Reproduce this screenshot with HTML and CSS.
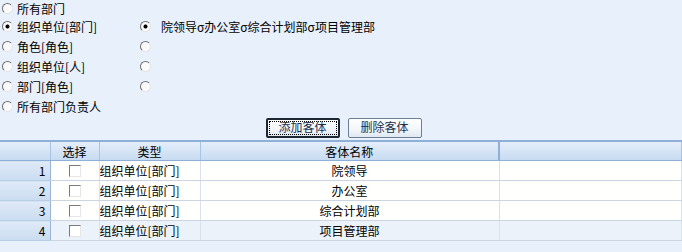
FILE: index.html
```html
<!DOCTYPE html>
<html lang="zh-CN">
<head>
    <meta charset="UTF-8" />
    <title>选择客体</title>
    <link rel="stylesheet" href="styles.css">
</head>
<body>

    <div class="chooser">
        <div class="types">
            <label class="opt first"><input type="radio" name="type"><span>所有部门</span></label>
            <label class="opt"><input type="radio" name="type" checked><span>组织单位[部门]</span></label>
            <label class="opt"><input type="radio" name="type"><span>角色[角色]</span></label>
            <label class="opt"><input type="radio" name="type"><span>组织单位[人]</span></label>
            <label class="opt"><input type="radio" name="type"><span>部门[角色]</span></label>
            <label class="opt"><input type="radio" name="type"><span>所有部门负责人</span></label>
        </div>
        <div class="targets">
            <label class="opt"><input type="radio" name="target" checked><span>院领导σ办公室σ综合计划部σ项目管理部</span></label>
            <label class="opt"><input type="radio" name="target"></label>
            <label class="opt"><input type="radio" name="target"></label>
            <label class="opt"><input type="radio" name="target"></label>
        </div>
    </div>

    <div class="actions">
        <button class="btn focus" type="button">添加客体</button>
        <button class="btn" type="button">删除客体</button>
    </div>

    <table class="grid">
        <colgroup>
            <col class="c-num">
            <col class="c-sel">
            <col class="c-type">
            <col class="c-name">
            <col>
        </colgroup>
        <thead>
            <tr>
                <th></th>
                <th>选择</th>
                <th>类型</th>
                <th>客体名称</th>
                <th></th>
            </tr>
        </thead>
        <tbody>
            <tr>
                <td class="num">1</td>
                <td class="sel"><input type="checkbox"></td>
                <td>组织单位[部门]</td>
                <td class="name">院领导</td>
                <td></td>
            </tr>
            <tr>
                <td class="num">2</td>
                <td class="sel"><input type="checkbox"></td>
                <td>组织单位[部门]</td>
                <td class="name">办公室</td>
                <td></td>
            </tr>
            <tr>
                <td class="num">3</td>
                <td class="sel"><input type="checkbox"></td>
                <td>组织单位[部门]</td>
                <td class="name">综合计划部</td>
                <td></td>
            </tr>
            <tr class="current">
                <td class="num">4</td>
                <td class="sel"><input type="checkbox"></td>
                <td>组织单位[部门]</td>
                <td class="name">项目管理部</td>
                <td></td>
            </tr>
        </tbody>
    </table>

</body>
</html>
```

FILE: styles.css
```css
body {
    margin: 0;
    padding: 0;
    background-color: #e8f1fb;
    color: #000;
    font-family: "Noto Sans CJK SC", "DejaVu Sans", sans-serif;
    font-size: 12px;
}
.chooser {
    display: flex;
    height: 116px;
}
.types {
    display: flex;
    flex-direction: column;
    width: 140px;
}
.targets {
    display: flex;
    flex-direction: column;
    padding-top: 16px;
}
.opt {
    display: flex;
    align-items: center;
    height: 20px;
    white-space: nowrap;
}
.opt.first {
    height: 16px;
}
.types .opt input {
    margin: 0 4px 0 2px;
}
.targets .opt input {
    margin: 0 10px 0 0;
}
.opt input {
    appearance: none;
    width: 11px;
    height: 11px;
    border-radius: 50%;
    border: 1px solid;
    border-color: #6f6f6f #e4e4e4 #e4e4e4 #6f6f6f;
    background: #fbfbfb;
    flex: none;
}
.opt input:checked {
    background: radial-gradient(circle, #000 0, #000 1.6px, #fbfbfb 2.4px);
}
.actions {
    display: flex;
    justify-content: center;
    gap: 8px;
    padding-left: 5px;
    margin-top: 2px;
    height: 20px;
}
.btn {
    width: 74px;
    height: 20px;
    padding: 0 0 2px;
    line-height: 14px;
    font-family: inherit;
    font-size: 12px;
    color: #1b2f52;
    border: 1px solid #6c7f96;
    border-radius: 2px;
    background: linear-gradient(#ffffff, #f2f6fa 60%, #dfe7f0);
}
.btn.focus {
    border: 2px solid #1d2633;
    outline: 1px dotted #000;
    outline-offset: -4px;
}
.grid {
    width: 100%;
    margin-top: 2px;
    border-collapse: collapse;
    table-layout: fixed;
}
.c-num {
    width: 50px;
}
.c-sel {
    width: 49px;
}
.c-type {
    width: 101px;
}
.c-name {
    width: 299px;
}
.grid th {
    height: 18px;
    padding: 0;
    font-weight: normal;
    border-top: 2px solid #8eb0d8;
    border-bottom: 1px solid #8eb0d8;
    border-right: 1px solid #a9c3e2;
    background: linear-gradient(#e4eefa, #c7dbf1);
}
.grid th:nth-child(4) {
    border-right: 2px solid #8eb0d8;
}
.grid td {
    height: 19px;
    padding: 0;
    background: #fffffe;
    border-bottom: 1px solid #cbd6e2;
    border-right: 1px solid #d9e1ea;
    white-space: nowrap;
    overflow: hidden;
}
.grid td.num {
    text-align: right;
    padding-right: 4px;
    border-right: 1px solid #98b6da;
    border-bottom: 1px solid #b9cde6;
    background: linear-gradient(#dfeaf7, #cadcf0);
}
.grid td.sel {
    text-align: center;
}
.grid td.name {
    text-align: center;
}
.grid tr.current td {
    background: #ebf2fa;
}
.grid tr.current td.num {
    background: linear-gradient(#dfeaf7, #cadcf0);
}
.sel input {
    appearance: none;
    display: block;
    margin: 0 auto;
    width: 12px;
    height: 12px;
    border: 1px solid;
    border-color: #7a7a7a #e6e6e6 #e6e6e6 #7a7a7a;
    background: #ffffff;
}
```
